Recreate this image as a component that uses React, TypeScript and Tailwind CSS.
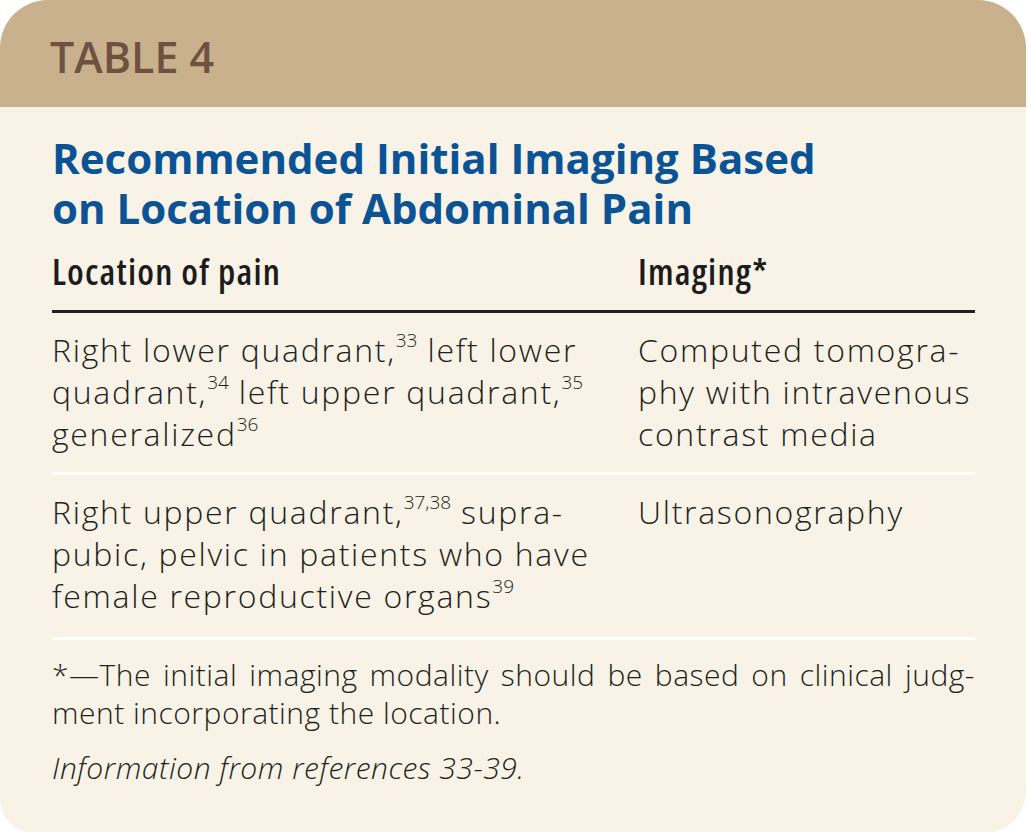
import React from "react";

const sans = "font-['Open_Sans',sans-serif]";

function Sup({ children }: { children: React.ReactNode }) {
  return <sup className="relative top-[-3px] text-[19px] tracking-normal align-super leading-none">{children}</sup>;
}

export default function App() {
  return (
    <div className="min-h-screen bg-white">
      <div className="w-[1026px] overflow-hidden rounded-t-[48px] rounded-bl-[34px] rounded-br-[42px] bg-[#f8f3e6] pb-[46px]">
        <header className="flex h-[107px] items-center bg-[#c9b18d] px-[50px] pt-[8px]">
          <h2 className={`${sans} text-[43px] font-semibold text-[#6f513f]`}>TABLE 4</h2>
        </header>

        <div className="px-[52px] pr-[51px]">
          <h1 className={`mt-[26px] ${sans} text-[42px] font-bold leading-[50px] text-[#0b5394]`}>
            Recommended Initial Imaging Based
            <br />
            on Location of Abdominal Pain
          </h1>

          <div className={`mt-[19px] grid grid-cols-[586px_1fr] border-b-[3px] border-[#231f20] pb-[18px] ${sans} font-stretch-condensed text-[36px] font-semibold leading-[40px] tracking-[1.2px] text-[#1d1b1b]`}>
            <div>Location of pain</div>
            <div>Imaging*</div>
          </div>

          <div className={`grid grid-cols-[586px_1fr] border-b-[3px] border-white pt-[16px] pb-[17px] ${sans} text-[32px] font-light leading-[42px] tracking-[1.7px] text-[#231f20]`}>
            <div>
              <span className="block">Right lower quadrant,<Sup>33</Sup> left lower</span>
              <span className="block">quadrant,<Sup>34</Sup> left upper quadrant,<Sup>35</Sup></span>
              <span className="block">generalized<Sup>36</Sup></span>
            </div>
            <div>
              <span className="block">Computed tomogra-</span>
              <span className="block">phy with intravenous</span>
              <span className="block">contrast media</span>
            </div>
          </div>

          <div className={`grid grid-cols-[586px_1fr] border-b-[3px] border-white pt-[16px] pb-[20px] ${sans} text-[32px] font-light leading-[42px] tracking-[1.7px] text-[#231f20]`}>
            <div>
              <span className="block">Right upper quadrant,<Sup>37,38</Sup> supra-</span>
              <span className="block">pubic, pelvic in patients who have</span>
              <span className="block">female reproductive organs<Sup>39</Sup></span>
            </div>
            <div>
              <span className="block">Ultrasonography</span>
            </div>
          </div>

          <div className={`mt-[16px] ${sans} text-[30px] font-light leading-[38px] tracking-[0.5px] text-[#231f20]`}>
            <p className="text-justify [text-align-last:justify]">*—The initial imaging modality should be based on clinical judg-</p>
            <p>ment incorporating the location.</p>
            <p className="mt-[17px] italic">Information from references 33-39.</p>
          </div>
        </div>
      </div>
    </div>
  );
}
